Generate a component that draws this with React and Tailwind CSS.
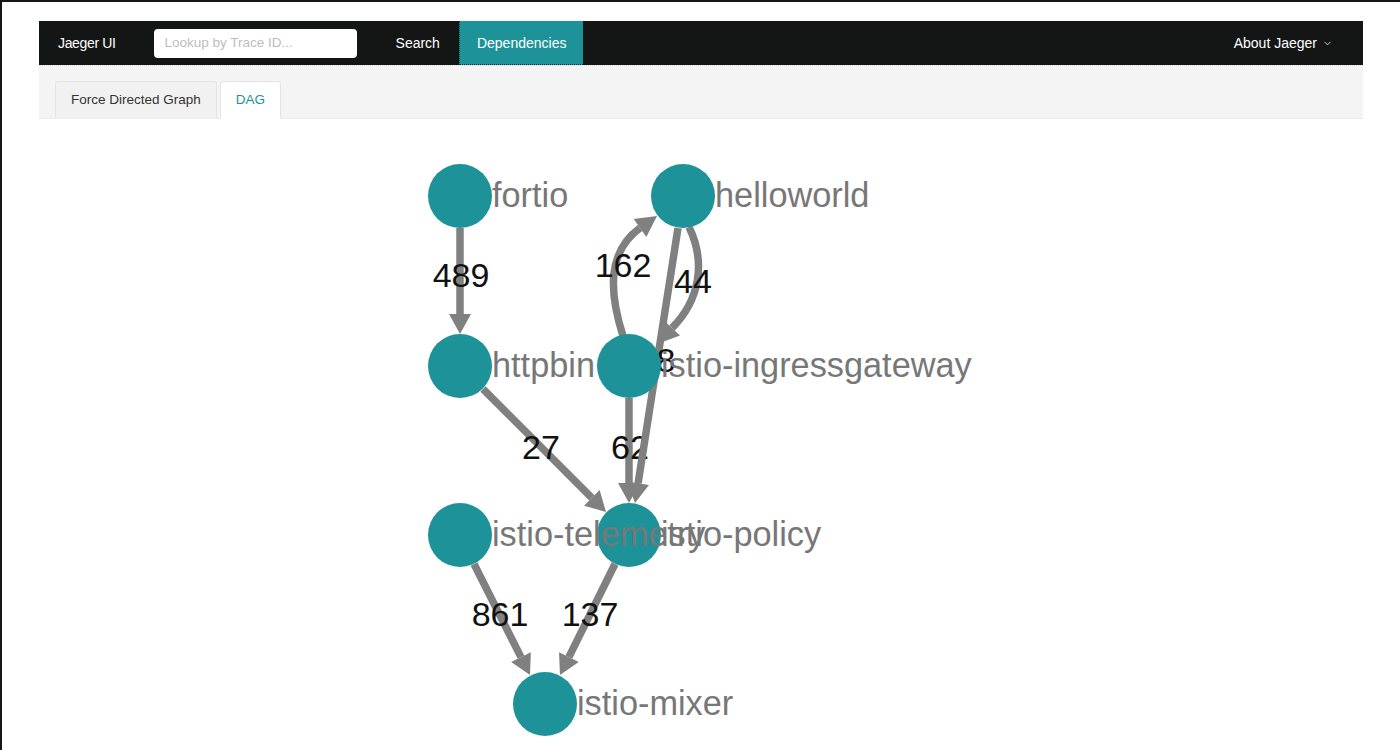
import React from "react";
import { ChevronDown } from "lucide-react";

const TEAL = "#1d9399";
const EDGE = "#808080";

const nodes = [
  { id: "fortio", x: 460, y: 196 },
  { id: "helloworld", x: 683, y: 196 },
  { id: "httpbin", x: 460, y: 366 },
  { id: "istio-ingressgateway", x: 629, y: 366 },
  { id: "istio-telemetry", x: 460, y: 535 },
  { id: "istio-policy", x: 629, y: 535 },
  { id: "istio-mixer", x: 545, y: 704 },
];

// straight edges: start point -> arrow tip
const lines = [
  { x1: 460, y1: 228, x2: 460, y2: 334, label: "489", lx: 461, ly: 275 },
  { x1: 483, y1: 389, x2: 606, y2: 512, label: "27", lx: 541, ly: 447 },
  { x1: 629, y1: 398, x2: 629, y2: 503, label: "62", lx: 630, ly: 447 },
  { x1: 678, y1: 228, x2: 635, y2: 503, label: "8", lx: 666, ly: 360 },
  { x1: 474, y1: 564, x2: 530, y2: 675, label: "861", lx: 500, ly: 614 },
  { x1: 615, y1: 564, x2: 560, y2: 675, label: "137", lx: 590, ly: 614 },
];

// curved edges: path to arrow base, then base -> tip
const curves = [
  { d: "M 623 336 C 609 292, 607 252, 640 228", bx: 640, by: 228, tx: 657, ty: 216, label: "162", lx: 623, ly: 265 },
  { d: "M 689 227 C 706 262, 700 300, 672 328", bx: 672, by: 328, tx: 657, ty: 344, label: "44", lx: 693, ly: 281 },
];

function head(bx, by, tx, ty) {
  const dx = tx - bx;
  const dy = ty - by;
  const len = Math.hypot(dx, dy);
  const px = (-dy / len) * 11;
  const py = (dx / len) * 11;
  return `${tx},${ty} ${bx + px},${by + py} ${bx - px},${by - py}`;
}

function Arrow({ x1, y1, x2, y2 }) {
  const dx = x2 - x1;
  const dy = y2 - y1;
  const len = Math.hypot(dx, dy);
  const bx = x2 - (dx / len) * 20;
  const by = y2 - (dy / len) * 20;
  return (
    <g>
      <line x1={x1} y1={y1} x2={bx} y2={by} stroke={EDGE} strokeWidth="7.5" />
      <polygon points={head(bx, by, x2, y2)} fill={EDGE} />
    </g>
  );
}

const EdgeLabel = ({ x, y, children }) => (
  <text x={x} y={y + 12} textAnchor="middle" fontSize="34" fill="#111">
    {children}
  </text>
);

const DagGraph = () => {
  return (
    <svg width="1324" height="631" className="block" style={{ fontFamily: '"Liberation Sans", Arial, sans-serif' }}>
      <g transform="translate(-39,-119)">
        {lines.map((e) => (
          <g key={e.label}>
            <Arrow {...e} />
            <EdgeLabel x={e.lx} y={e.ly}>{e.label}</EdgeLabel>
          </g>
        ))}
        {curves.map((c) => (
          <g key={c.label}>
            <path d={c.d} fill="none" stroke={EDGE} strokeWidth="7.5" />
            <polygon points={head(c.bx, c.by, c.tx, c.ty)} fill={EDGE} />
            <EdgeLabel x={c.lx} y={c.ly}>{c.label}</EdgeLabel>
          </g>
        ))}

        {nodes.map((n) => (
          <circle key={n.id} cx={n.x} cy={n.y} r="32" fill={TEAL} />
        ))}
        {nodes.map((n) => (
          <text key={n.id + "-l"} x={n.x + 32} y={n.y + 11} fontSize="34.3" fill="#777">
            {n.id}
          </text>
        ))}
      </g>
    </svg>
  );
};

export default function App() {
  return (
    <div
      className="w-[1400px] h-[750px] overflow-hidden bg-white border-t-2 border-l-2 border-[#161616]"
      style={{ fontFamily: '"Liberation Sans", Helvetica, Arial, sans-serif' }}
    >
      <div className="ml-[37px] mt-[19px] w-[1324px]">
        {/* top nav */}
        <nav className="h-[44px] bg-[#141616] flex items-center text-white text-[14px]">
          <span className="pl-[19px] pr-[38px] tracking-tight">Jaeger UI</span>
          <div className="w-[203px] h-[29px] bg-white rounded-[4px] flex items-center pl-[11px] text-[13.5px] text-[#bdbdbd]">
            Lookup by Trace ID...
          </div>
          <div className="ml-[20px] flex h-full">
            <span className="px-[19px] flex items-center">Search</span>
            <span className="px-[17px] pt-px flex items-center bg-[#1d9399] border-l border-b border-dotted border-[#0c3b3d]">
              Dependencies
            </span>
          </div>
          <div className="ml-auto pr-[30px] flex items-center gap-[5px]">
            <span>About Jaeger</span>
            <ChevronDown size={11} strokeWidth={2} className="text-[#c8c8c8]" />
          </div>
        </nav>

        {/* tabs */}
        <div className="h-[54px] bg-[#f4f4f4] border-t border-dotted border-[#dcdcdc] border-b-[#e6e6e6] border-b border-b-solid flex items-end pl-[16px] gap-[3px] text-[13.5px]">
          <div className="h-[37px] px-[15px] flex items-center bg-[#f1f1f1] border border-[#e4e4e4] border-b-0 rounded-t-[3px] text-[#333]">
            Force Directed Graph
          </div>
          <div className="h-[38px] -mb-px px-[15px] flex items-center bg-white border border-[#e4e4e4] border-b-0 rounded-t-[3px] text-[#1d9399]">
            DAG
          </div>
        </div>

        <DagGraph />
      </div>
    </div>
  );
}
